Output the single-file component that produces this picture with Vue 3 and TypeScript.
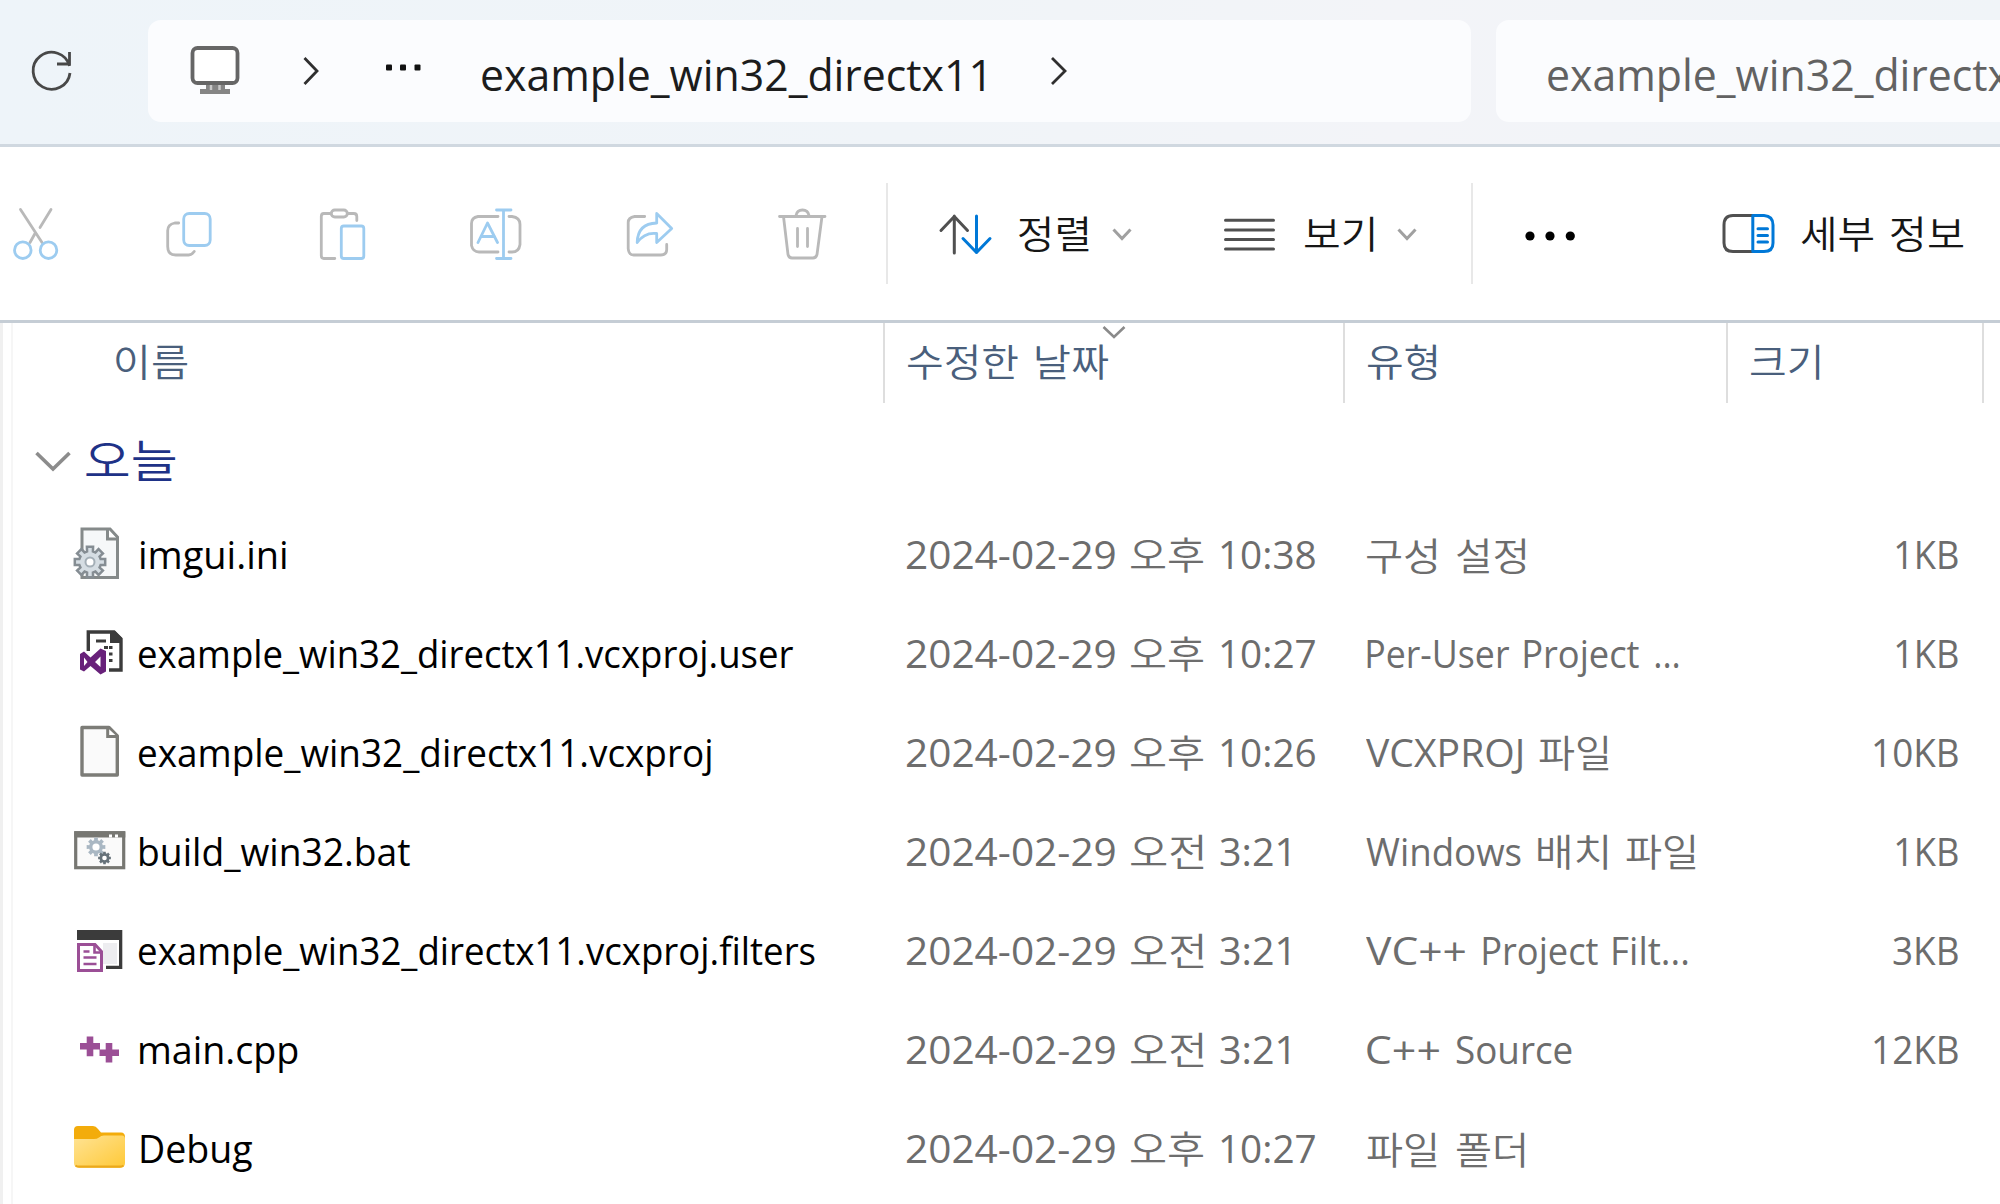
<script setup lang="ts">
import type { Directive } from 'vue'

interface Word {
  text: string
  width: number
  gap?: number
}

interface FileRow {
  icon: 'ini' | 'user' | 'page' | 'batch' | 'filters' | 'cpp' | 'folder'
  name: Word
  half: '오전' | '오후'
  time: Word
  type: Word[]
  size?: Word
}

const hangul = /[\uac00-\ud7a3]/

/** Stretches a word horizontally so that its ink covers exactly the given width. */
const vFit: Directive<HTMLElement, number> = {
  mounted(el, { value }) {
    const ctx = document.createElement('canvas').getContext('2d')
    if (!ctx) return
    const css = getComputedStyle(el)
    ctx.font = `${css.fontWeight} ${css.fontSize} ${css.fontFamily}`
    const box = ctx.measureText(el.textContent ?? '')
    const ink = box.actualBoundingBoxRight + box.actualBoundingBoxLeft
    el.style.width = `${value}px`
    el.style.transform = `scaleX(${value / ink}) translateX(${box.actualBoundingBoxLeft}px)`
  },
}

const rows: FileRow[] = [
  {
    icon: 'ini',
    name: { text: 'imgui.ini', width: 146, gap: 1 },
    half: '오후',
    time: { text: '10:38', width: 94 },
    type: [{ text: '구성', width: 71 }, { text: '설정', width: 70, gap: 19 }],
    size: { text: '1KB', width: 62 },
  },
  {
    icon: 'user',
    name: { text: 'example_win32_directx11.vcxproj.user', width: 654 },
    half: '오후',
    time: { text: '10:27', width: 94 },
    type: [
      { text: 'Per-User', width: 142, gap: 1 },
      { text: 'Project', width: 115, gap: 15 },
      { text: '...', width: 24, gap: 16 },
    ],
    size: { text: '1KB', width: 62 },
  },
  {
    icon: 'page',
    name: { text: 'example_win32_directx11.vcxproj', width: 572 },
    half: '오후',
    time: { text: '10:26', width: 94 },
    type: [{ text: 'VCXPROJ', width: 156 }, { text: '파일', width: 70, gap: 17 }],
    size: { text: '10KB', width: 84 },
  },
  {
    icon: 'batch',
    name: { text: 'build_win32.bat', width: 270, gap: 1 },
    half: '오전',
    time: { text: '3:21', width: 69, gap: -1 },
    type: [
      { text: 'Windows', width: 155 },
      { text: '배치', width: 69, gap: 17 },
      { text: '파일', width: 70, gap: 19 },
    ],
    size: { text: '1KB', width: 62 },
  },
  {
    icon: 'filters',
    name: { text: 'example_win32_directx11.vcxproj.filters', width: 676 },
    half: '오전',
    time: { text: '3:21', width: 69, gap: -1 },
    type: [
      { text: 'VC++', width: 99 },
      { text: 'Project', width: 115, gap: 18 },
      { text: 'Filt...', width: 75, gap: 15 },
    ],
    size: { text: '3KB', width: 65 },
  },
  {
    icon: 'cpp',
    name: { text: 'main.cpp', width: 158, gap: 1 },
    half: '오전',
    time: { text: '3:21', width: 69, gap: -1 },
    type: [{ text: 'C++', width: 72, gap: 1 }, { text: 'Source', width: 116, gap: 17 }],
    size: { text: '12KB', width: 84 },
  },
  {
    icon: 'folder',
    name: { text: 'Debug', width: 111, gap: 2 },
    half: '오후',
    time: { text: '10:27', width: 94 },
    type: [{ text: '파일', width: 70, gap: 1 }, { text: '폴더', width: 69, gap: 19 }],
  },
]

/** Outline of a cog with eight teeth. */
function cog(cx: number, cy: number, outer: number, inner: number): string {
  const points: string[] = []
  for (let i = 0; i < 8; i++) {
    const mid = (i * Math.PI) / 4
    for (const [offset, r] of [[-0.27, inner], [-0.2, outer], [0.2, outer], [0.27, inner]]) {
      points.push(`${(cx + r * Math.cos(mid + offset)).toFixed(2)},${(cy + r * Math.sin(mid + offset)).toFixed(2)}`)
    }
  }
  return points.join(' ')
}
</script>

<template>
  <div class="explorer">
    <header class="nav">
      <svg class="refresh" viewBox="26 46 50 50" width="50" height="50">
        <path d="M69.5 66 A18.5 18.5 0 1 0 70 73 M69.5 52 V64 H57" />
      </svg>
      <div class="address">
        <svg class="monitor" viewBox="188 42 54 54" width="54" height="54">
          <path class="stand" d="M206 83 H225 V88 H230 V93 H200 V88 H206 Z" />
          <path class="neck" d="M211 84 V89 M219.5 84 V89" />
          <rect x="192.5" y="47" width="45" height="35" rx="5" />
        </svg>
        <svg class="crumb first" viewBox="300 54 22 34" width="22" height="34"><path d="M304.5 58 L317 71 L304.5 84" /></svg>
        <svg class="more" viewBox="384 62 40 12" width="40" height="12">
          <rect x="386" y="64.5" width="6" height="6" rx="1" />
          <rect x="400" y="64.5" width="6" height="6" rx="1" />
          <rect x="414.5" y="64.5" width="6" height="6" rx="1" />
        </svg>
        <span class="path"><span v-fit="502" class="word">example_win32_directx11</span></span>
        <svg class="crumb" viewBox="1048 54 22 34" width="22" height="34"><path d="M1052 58 L1065 71 L1052 84" /></svg>
      </div>
      <div class="search"><span v-fit="502" class="word">example_win32_directx11</span></div>
    </header>

    <div class="toolbar">
      <div class="actions">
        <svg viewBox="6 203.5 60 60" width="60" height="60">
          <path class="gray" d="M20.5 209 L42 242 M51 209 L40 227 M35 233 L30 242" />
          <circle class="blue" cx="22.8" cy="249.7" r="8.3" />
          <circle class="blue" cx="48.5" cy="249.7" r="8.3" />
        </svg>
        <svg viewBox="159.3 203.5 60 60" width="60" height="60">
          <path class="gray" d="M179 222.5 H175 Q168 224 168 230 V246 Q168 254.5 176 254.5 H189 Q192 254.5 194.5 251" />
          <rect class="blue" x="184" y="213" width="26.5" height="32" rx="5.5" />
        </svg>
        <svg viewBox="313.2 203.5 60 60" width="60" height="60">
          <path class="gray" d="M331 213 H324 Q321.5 213 321.5 216 V255 Q321.5 258 324 258 H335 M348 213 H354 Q357 213 357 216 V220" />
          <rect class="gray" x="331.5" y="209.5" width="16" height="7" rx="3.5" />
          <rect class="blue" x="341.5" y="225.5" width="22.5" height="32.5" rx="2.5" />
        </svg>
        <svg viewBox="466 203.5 60 60" width="60" height="60">
          <path class="gray" d="M498 216 H478 Q471.5 217 471.5 223 V245 Q473 251.5 479 251.5 H498 M509 216 H512 Q520 217 520 224 V244 Q519 251.5 512 251.5 H509" />
          <path class="blue" d="M503.5 209.5 V258 M496.5 209.5 H511 M496.5 258 H511 M478 242 L487.5 222.5 L497.5 242 M481 236 H494.5" />
        </svg>
        <svg viewBox="619.3 203.5 60 60" width="60" height="60">
          <path class="gray" d="M645 216 H635 Q628.5 217 628.5 222 V248 Q629 254.5 634 254.5 H661 Q667 254.5 667 249 V244" />
          <path class="blue" d="M657 213 L672 228 L657 242 V233 Q645 231.5 637.5 242 Q638 223 657 222.5 Z" />
        </svg>
        <svg viewBox="773 203.5 60 60" width="60" height="60">
          <path class="gray" d="M779.5 216 H825 M796 215 Q797 209.5 802.5 209.5 Q808 209.5 809 215 M783.5 216 L788 254 Q789 257.5 792 257.5 H813 Q816 257.5 817 254 L822 216 M797.5 228 V246 M807.5 228 V246" />
        </svg>
      </div>
      <i class="divider first" />
      <svg class="sort" viewBox="936 208 60 50" width="60" height="50">
        <path class="dark" d="M954.3 252 V215 M941 229.5 L954.3 215.5 L967.5 229.5" />
        <path class="accent" d="M976.5 215 V251.5 M963 237.5 L976.5 251.5 L990 237.5" />
      </svg>
      <span v-fit="70" class="word ko sort-label">정렬</span>
      <svg class="caret" viewBox="1110 224 24 20" width="24" height="20"><path d="M1113.5 229.5 L1122 238.5 L1130.5 229.5" /></svg>
      <svg class="lines" viewBox="1222 213 56 40" width="56" height="40">
        <path class="dark" d="M1225.5 219.3 H1273.5 M1225.5 229 H1273.5 M1225.5 238.5 H1273.5 M1225.5 248 H1273.5" />
      </svg>
      <span v-fit="69" class="word ko view-label">보기</span>
      <svg class="caret second" viewBox="1395 224 24 20" width="24" height="20"><path d="M1398.5 229.5 L1407 238.5 L1415.5 229.5" /></svg>
      <i class="divider second" />
      <svg class="dots" viewBox="1524 229 52 14" width="52" height="14">
        <circle cx="1530" cy="236" r="4.6" />
        <circle cx="1550" cy="236" r="4.6" />
        <circle cx="1570.3" cy="236" r="4.6" />
      </svg>
      <svg class="details" viewBox="1720 209 58 50" width="58" height="50">
        <path class="dark" d="M1753 215.5 H1733 Q1724 215.5 1724 225 V243 Q1724 251.5 1733 251.5 H1753" />
        <path class="accent" d="M1752.8 215.5 H1764 Q1773 216 1773 225 V243 Q1773 251.5 1764 251.5 H1752.8 Z M1758 228.7 H1767.5 M1758 235.4 H1767.5 M1758 242 H1767.5" />
      </svg>
      <span v-fit="72" class="word ko details-label">세부</span>
      <span v-fit="72" class="word ko details-label second">정보</span>
    </div>

    <main class="content">
      <div class="splitter" />
      <div class="list">
        <div class="columns">
          <div class="column name"><span v-fit="71" class="word ko">이름</span></div>
          <div class="column date">
            <span v-fit="111" class="word ko">수정한</span>
            <span v-fit="72" class="word ko spaced">날짜</span>
            <svg class="order" viewBox="1100 323 28 18" width="28" height="18"><path d="M1103.5 327 L1114 337 L1124.5 327" /></svg>
          </div>
          <div class="column type"><span v-fit="70" class="word ko">유형</span></div>
          <div class="column size"><span v-fit="69" class="word ko">크기</span></div>
        </div>

        <div class="group">
          <svg viewBox="32 448 42 30" width="42" height="30"><path d="M36.5 455 L53 471 L69.5 455" /></svg>
          <span v-fit="89" class="word ko">오늘</span>
        </div>

        <div v-for="row in rows" :key="row.name.text" class="row">
          <svg v-if="row.icon === 'ini'" class="icon" viewBox="70 525 60 60">
            <path d="M82 529 H110 L117.5 537 V577.5 H82 Z" fill="#f6f8f9" stroke="#858a8a" stroke-width="3" />
            <path d="M107.5 529 V539 H117" fill="#fff" stroke="#858a8a" stroke-width="3" />
            <polygon :points="cog(90, 562, 15.5, 11)" fill="#d5dde3" stroke="#858d93" stroke-width="2.5" />
            <circle cx="90" cy="562" r="4.5" fill="#fff" stroke="#a4afb7" stroke-width="2" />
          </svg>
          <svg v-else-if="row.icon === 'user'" class="icon" viewBox="70 624 60 60">
            <path d="M88.3 651 V632 H114 L121 639 V670 H109" fill="none" stroke="#3b3b3b" stroke-width="3.4" />
            <path d="M110 631 H115 L122 638 V643 H110 Z" fill="#3b3b3b" />
            <path d="M96 641 H106 M104 647.5 H108 M109 647.5 H112.5 M109 654 H112.5 M109 660.5 H112.5" fill="none" stroke="#3b3b3b" stroke-width="2.8" />
            <path d="M80 654 L84 651.5 L90.5 657.5 L100.5 648.5 L106 651 V671.5 L100.5 674.5 L90.5 666 L84 671.5 L80 669.5 Z M84 657.5 V666 L87.5 662 Z M100.5 656.5 L95 662 L100.5 667 Z" fill="#68217a" fill-rule="evenodd" />
          </svg>
          <svg v-else-if="row.icon === 'page'" class="icon" viewBox="70 723 60 60">
            <path d="M82 727.5 H109 L117.3 736 V775 H82 Z" fill="#fafafa" stroke="#7c7c77" stroke-width="3.4" stroke-linejoin="round" />
            <path d="M107.7 728 V736.5 H117" fill="#fff" stroke="#7c7c77" stroke-width="3" />
          </svg>
          <svg v-else-if="row.icon === 'batch'" class="icon" viewBox="70 822 60 60">
            <rect x="75.7" y="832.7" width="48" height="35" fill="#fafafa" stroke="#777772" stroke-width="3.2" />
            <path d="M74.5 834.5 H125.3" stroke="#777772" stroke-width="6" />
            <path d="M109 836 H112 M115 836 H118" stroke="#fff" stroke-width="3" />
            <polygon :points="cog(96, 847, 9.5, 7)" fill="#a9b7c3" />
            <circle cx="96" cy="847" r="3.6" fill="#fff" />
            <polygon :points="cog(104.5, 858, 6.5, 5)" fill="#66727a" />
            <circle cx="104.5" cy="858" r="2.3" fill="#fff" />
          </svg>
          <svg v-else-if="row.icon === 'filters'" class="icon" viewBox="70 921 60 60">
            <rect x="103" y="943" width="14" height="21" fill="#ededf0" />
            <path d="M77 930 H122.3 V969 H106 V965.7 H119 V940 H77 Z" fill="#3b3b3b" />
            <path d="M78.5 944.5 H95 L101.5 951.5 V970.5 H78.5 Z" fill="#fff" stroke="#9b4f96" stroke-width="3" />
            <path d="M94.5 944 V952.5 H102 M83.5 951.5 H89.5 M83.5 957.5 H96.5 M83.5 964 H96.5" fill="none" stroke="#9b4f96" stroke-width="2.6" />
          </svg>
          <svg v-else-if="row.icon === 'cpp'" class="icon" viewBox="70 1020 60 60">
            <path d="M80 1045.3 H100 M90 1035.5 V1055.3 M99.5 1051.7 H119 M109 1042 V1061.5" stroke="#9b4f96" stroke-width="6.6" />
          </svg>
          <svg v-else class="icon" viewBox="70 1119 60 60">
            <defs>
              <linearGradient id="folder-front" x1="0" y1="0" x2="1" y2="1">
                <stop offset="0" stop-color="#ffe394" />
                <stop offset="1" stop-color="#ffc937" />
              </linearGradient>
            </defs>
            <path d="M74 1129 Q74 1125 78 1125 H93 Q96 1125 98 1128 L101 1131.5 H121 Q125 1131.5 125 1136 V1150 H74 Z" fill="#f3ac0b" />
            <path d="M74 1138 H94 Q97 1138 99 1136.5 Q101 1134.5 104 1134.5 H122 Q125 1134.5 125 1138 V1162 Q125 1166.7 120 1166.7 H79 Q74 1166.7 74 1162 Z" fill="url(#folder-front)" />
            <path d="M75.5 1164.5 Q77 1165.7 79 1165.7 H120 Q122 1165.7 123.5 1164.5" fill="none" stroke="#eba91c" stroke-width="2.2" />
          </svg>
          <div class="cell name">
            <span v-fit="row.name.width" class="word" :style="{ marginLeft: `${row.name.gap ?? 0}px` }">{{ row.name.text }}</span>
          </div>
          <div class="cell date">
            <span v-fit="209" class="word">2024-02-29</span>
            <span v-fit="73" class="word ko half">{{ row.half }}</span>
            <span v-fit="row.time.width" class="word time" :style="{ marginLeft: `${18 + (row.time.gap ?? 0)}px` }">{{ row.time.text }}</span>
          </div>
          <div class="cell type">
            <span
              v-for="(word, i) in row.type"
              :key="i"
              v-fit="word.width"
              class="word"
              :class="{ ko: hangul.test(word.text) }"
              :style="{ marginLeft: `${word.gap ?? 0}px` }"
            >{{ word.text }}</span>
          </div>
          <div class="cell size">
            <span v-if="row.size" v-fit="row.size.width" class="word">{{ row.size.text }}</span>
          </div>
        </div>
      </div>
    </main>
  </div>
</template>

<style>
body {
  margin: 0;
  overflow: hidden;
}
</style>

<style scoped>
.explorer {
  box-sizing: border-box;
  width: 2000px;
  height: 1204px;
  overflow: hidden;
  display: flex;
  flex-direction: column;
  background: #fff;
  font-family: "Open Sans", "Noto Sans CJK KR", sans-serif;
  font-size: 38px;
  line-height: 54px;
  color: #000;
}

svg {
  display: block;
  flex: none;
  fill: none;
}

.word {
  display: inline-block;
  flex: none;
  white-space: nowrap;
  transform-origin: 0 50%;
}

.word.ko {
  font-family: "Noto Sans CJK KR", sans-serif;
  font-weight: 350;
}

/* Navigation bar */
.nav {
  box-sizing: border-box;
  flex: none;
  height: 147px;
  padding: 20px 0 22px 26px;
  display: flex;
  background: linear-gradient(90deg, #eef4f9 0%, #f0f4f8 45%, #f3f4f8 70%, #f0f4f8 100%);
  border-bottom: 3px solid #d0d8e0;
}

.refresh {
  margin-top: 26px;
  stroke: #484848;
  stroke-width: 2.8;
}

.address,
.search {
  height: 102px;
  background: #fbfcfe;
  border-radius: 13px;
  display: flex;
  align-items: center;
  font-size: 44px;
}

.address {
  width: 1323px;
  margin-left: 72px;
  color: #1c1c1c;
}

.search {
  flex: 1;
  margin-left: 25px;
  padding-left: 52px;
  border-radius: 13px 0 0 13px;
  color: #626262;
  overflow: hidden;
}

.address .word,
.search .word {
  margin-top: 5px;
}

.monitor {
  margin: -3px 0 0 40px;
}

.monitor rect {
  fill: #fff;
  stroke: #666;
  stroke-width: 3.8;
}

.monitor .stand {
  fill: #858585;
}

.monitor .neck {
  stroke: #c8c8c8;
  stroke-width: 2.5;
}

.crumb {
  stroke: #2f2f2f;
  stroke-width: 2.8;
}

.crumb.first {
  margin-left: 58px;
}

.more {
  margin: -6px 58px 0 62px;
  fill: #111;
}

.path {
  margin-right: 64px;
}

/* Command bar */
.toolbar {
  box-sizing: border-box;
  flex: none;
  height: 176px;
  display: flex;
  align-items: center;
  padding-left: 6px;
  border-bottom: 3px solid #c5cdd5;
  color: #161616;
}

.toolbar .word {
  margin-top: -3px;
}

.actions {
  display: flex;
  gap: 93.33px;
}

.actions svg {
  stroke-width: 2.8;
  stroke-linecap: round;
  stroke-linejoin: round;
}

.gray {
  stroke: #b9b9b9;
}

.blue {
  stroke: #9dccf0;
}

.dark {
  stroke: #505050;
}

.accent {
  stroke: #0078d7;
}

.divider {
  flex: none;
  width: 2px;
  height: 101px;
  background: #e8e8e8;
}

.divider.first {
  margin-left: 53px;
}

.divider.second {
  margin-left: 52px;
}

.sort,
.lines,
.details {
  stroke-width: 3;
  stroke-linecap: round;
  stroke-linejoin: round;
}

.sort {
  margin-left: 48px;
}

.sort-label {
  margin-left: 23px;
}

.caret {
  margin-left: 21px;
  stroke: #a0a0a0;
  stroke-width: 3;
}

.lines {
  margin-left: 88px;
}

.view-label {
  margin-left: 26px;
}

.caret.second {
  margin-left: 22px;
}

.dots {
  margin: 5px 0 0 51px;
  fill: #000;
}

.details {
  margin-left: 144px;
}

.details-label {
  margin-left: 23px;
}

.details-label.second {
  margin-left: 18px;
}

/* File list */
.content {
  flex: 1;
  display: flex;
}

.splitter {
  box-sizing: border-box;
  flex: none;
  width: 13px;
  border-left: 3px solid #f0f0f0;
  border-right: 2px solid #f6f6f6;
}

.list {
  flex: 1;
}

.columns {
  display: flex;
  height: 80px;
  color: #4a5f7c;
}

.column {
  box-sizing: border-box;
  position: relative;
  display: flex;
  flex: none;
  padding-top: 10px;
  border-right: 2px solid #dedede;
}

.column.name {
  width: 872px;
  padding-left: 103px;
}

.column.date {
  width: 460px;
  padding-left: 22px;
}

.column.type {
  width: 383px;
  padding-left: 22px;
}

.column.size {
  width: 256px;
  padding-left: 22px;
}

.spaced {
  margin-left: 18px;
}

.order {
  position: absolute;
  left: 215px;
  top: 0;
  stroke: #8a8a8a;
  stroke-width: 2.6;
}

.group {
  display: flex;
  align-items: center;
  height: 102.5px;
  padding-left: 19px;
  font-size: 45px;
  color: #1e3287;
}

.group svg {
  margin-top: 14px;
  stroke: #8c8c8c;
  stroke-width: 3.6;
}

.group .word {
  margin: 10px 0 0 12px;
}

.row {
  display: flex;
  align-items: center;
  height: 99.1px;
}

.icon {
  width: 60px;
  height: 60px;
  margin-left: 57px;
}

.cell {
  display: flex;
  flex: none;
  align-items: baseline;
  margin-top: -3px;
}

.cell .ko {
  line-height: 50px;
}

.cell.name {
  width: 767px;
  padding-left: 9px;
}

.cell.date {
  width: 460px;
  color: #6d6d6d;
}

.cell.type {
  width: 370px;
  color: #6d6d6d;
}

.cell.size {
  width: 222px;
  justify-content: flex-end;
  color: #6d6d6d;
}

.half {
  margin-left: 15px;
}
</style>
